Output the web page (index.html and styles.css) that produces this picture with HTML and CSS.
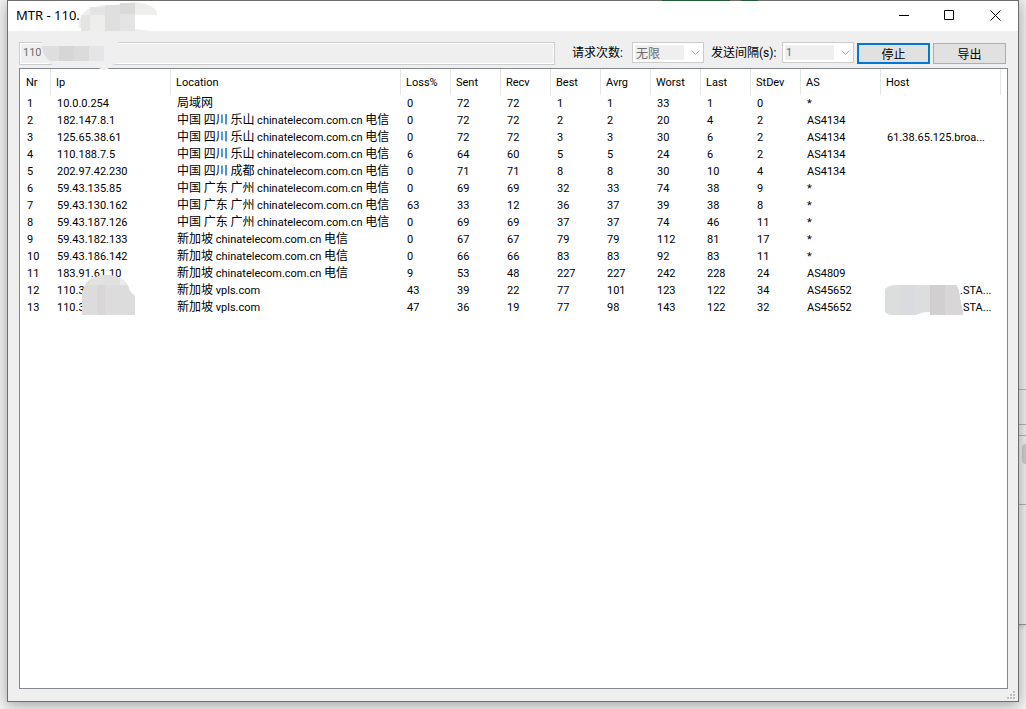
FILE: index.html
```html
<!DOCTYPE html>
<html lang="zh-CN">
<head>
<meta charset="utf-8">
<title>MTR - 110</title>
<link rel="stylesheet" href="styles.css">
</head>
<body>
<div class="backdrop" aria-hidden="true">
  <div class="pane pane-top"></div>
  <div class="pane pane-field"></div>
  <div class="pane pane-gap"></div>
  <div class="pane pane-scroll"><span class="thumb"></span></div>
  <div class="pane pane-foot"></div>
</div>
<main class="window">
  <header class="titlebar">
    <h1 class="title">MTR - 110.</h1>
    <div class="controls">
      <button class="control" aria-label="最小化"><svg width="11" height="11" viewBox="0 0 11 11"><path d="M1 5.5h10"/></svg></button>
      <button class="control" aria-label="最大化"><svg width="11" height="11" viewBox="0 0 11 11"><path d="M.5.5h9v9h-9z"/></svg></button>
      <button class="control" aria-label="关闭"><svg width="11" height="11" viewBox="0 0 11 11"><path d="M.5.5l10 10M10.5.5l-10 10"/></svg></button>
    </div>
  </header>
  <form class="toolbar">
    <input class="address" aria-label="Host" value="110" disabled>
    <label class="label" for="count">请求次数:</label>
    <span class="combo"><select id="count" class="cjk" disabled><option>无限</option></select><svg class="chevron" width="9" height="5" viewBox="0 0 9 5"><path d="M.5.5l4 4 4-4"/></svg></span>
    <label class="label label-interval" for="interval">发送间隔(s):</label>
    <span class="combo"><select id="interval" disabled><option>1</option></select><svg class="chevron" width="9" height="5" viewBox="0 0 9 5"><path d="M.5.5l4 4 4-4"/></svg></span>
    <div class="actions">
      <button type="button" class="button button-default">停止</button>
      <button type="button" class="button">导出</button>
    </div>
  </form>
  <section class="list">
    <table class="hops">
      <colgroup><col class="c-nr"><col class="c-ip"><col class="c-location"><col class="c-num" span="8"><col class="c-as"><col></colgroup>
      <thead>
        <tr><th>Nr</th><th>Ip</th><th>Location</th><th>Loss%</th><th>Sent</th><th>Recv</th><th>Best</th><th>Avrg</th><th>Worst</th><th>Last</th><th>StDev</th><th>AS</th><th>Host</th></tr>
      </thead>
      <tbody>
        <tr><td>1</td><td>10.0.0.254</td><td><span class="cjk">局域网</span></td><td>0</td><td>72</td><td>72</td><td>1</td><td>1</td><td>33</td><td>1</td><td>0</td><td>*</td><td></td></tr>
        <tr><td>2</td><td>182.147.8.1</td><td><span class="cjk">中国 四川 乐山</span> chinatelecom.com.cn <span class="cjk">电信</span></td><td>0</td><td>72</td><td>72</td><td>2</td><td>2</td><td>20</td><td>4</td><td>2</td><td>AS4134</td><td></td></tr>
        <tr><td>3</td><td>125.65.38.61</td><td><span class="cjk">中国 四川 乐山</span> chinatelecom.com.cn <span class="cjk">电信</span></td><td>0</td><td>72</td><td>72</td><td>3</td><td>3</td><td>30</td><td>6</td><td>2</td><td>AS4134</td><td>61.38.65.125.broa...</td></tr>
        <tr><td>4</td><td>110.188.7.5</td><td><span class="cjk">中国 四川 乐山</span> chinatelecom.com.cn <span class="cjk">电信</span></td><td>6</td><td>64</td><td>60</td><td>5</td><td>5</td><td>24</td><td>6</td><td>2</td><td>AS4134</td><td></td></tr>
        <tr><td>5</td><td>202.97.42.230</td><td><span class="cjk">中国 四川 成都</span> chinatelecom.com.cn <span class="cjk">电信</span></td><td>0</td><td>71</td><td>71</td><td>8</td><td>8</td><td>30</td><td>10</td><td>4</td><td>AS4134</td><td></td></tr>
        <tr><td>6</td><td>59.43.135.85</td><td><span class="cjk">中国 广东 广州</span> chinatelecom.com.cn <span class="cjk">电信</span></td><td>0</td><td>69</td><td>69</td><td>32</td><td>33</td><td>74</td><td>38</td><td>9</td><td>*</td><td></td></tr>
        <tr><td>7</td><td>59.43.130.162</td><td><span class="cjk">中国 广东 广州</span> chinatelecom.com.cn <span class="cjk">电信</span></td><td>63</td><td>33</td><td>12</td><td>36</td><td>37</td><td>39</td><td>38</td><td>8</td><td>*</td><td></td></tr>
        <tr><td>8</td><td>59.43.187.126</td><td><span class="cjk">中国 广东 广州</span> chinatelecom.com.cn <span class="cjk">电信</span></td><td>0</td><td>69</td><td>69</td><td>37</td><td>37</td><td>74</td><td>46</td><td>11</td><td>*</td><td></td></tr>
        <tr><td>9</td><td>59.43.182.133</td><td><span class="cjk">新加坡</span> chinatelecom.com.cn <span class="cjk">电信</span></td><td>0</td><td>67</td><td>67</td><td>79</td><td>79</td><td>112</td><td>81</td><td>17</td><td>*</td><td></td></tr>
        <tr><td>10</td><td>59.43.186.142</td><td><span class="cjk">新加坡</span> chinatelecom.com.cn <span class="cjk">电信</span></td><td>0</td><td>66</td><td>66</td><td>83</td><td>83</td><td>92</td><td>83</td><td>11</td><td>*</td><td></td></tr>
        <tr><td>11</td><td>183.91.61.10</td><td><span class="cjk">新加坡</span> chinatelecom.com.cn <span class="cjk">电信</span></td><td>9</td><td>53</td><td>48</td><td>227</td><td>227</td><td>242</td><td>228</td><td>24</td><td>AS4809</td><td></td></tr>
        <tr><td>12</td><td>110.3</td><td><span class="cjk">新加坡</span> vpls.com</td><td>43</td><td>39</td><td>22</td><td>77</td><td>101</td><td>123</td><td>122</td><td>34</td><td>AS45652</td><td class="masked-host">.STA...</td></tr>
        <tr><td>13</td><td>110.3</td><td><span class="cjk">新加坡</span> vpls.com</td><td>47</td><td>36</td><td>19</td><td>77</td><td>98</td><td>143</td><td>122</td><td>32</td><td>AS45652</td><td class="masked-host">.STA...</td></tr>
      </tbody>
    </table>
    <svg class="mask mask-ip" width="53" height="40" viewBox="0 0 53 40"><path fill="#dcdcdc" d="M0 40V18Q2 8 10 3Q24-3 38 3Q46 7 48 16L53 21V40z"/><path fill="#e2e2e2" d="M5 10Q9 2 22 0V10z"/><path fill="#e0e0e0" d="M22 0Q35 0 38 3V10H22z"/><path fill="#ebebeb" d="M38 3Q43 6 45 10H38z"/><path fill="#d8d6d7" d="M15 10h8v30h-8z"/></svg>
    <svg class="mask mask-host" width="78" height="30" viewBox="0 0 78 30"><path fill="#dcdddd" d="M0 4Q4 0 12 0H71Q74 2 75 14L78 27V30H45V27Q36 27 31 30H6Q0 29 0 26z"/><path fill="#d9dbde" d="M15 0h15v30H15z"/><path fill="#d1cfd0" d="M45 0h15v30H45z"/><path fill="#d8d6d7" d="M60 0h11q3 2 4 14l3 13v3H60z"/></svg>
  </section>
  <svg class="grip" width="8" height="8" viewBox="0 0 8 8"><path d="M6 0h2v2H6zM3 3h2v2H3zM6 3h2v2H6zM0 6h2v2H0zM3 6h2v2H3zM6 6h2v2H6z"/></svg>
  <svg class="mask mask-title" width="80" height="30" viewBox="0 0 80 30"><path fill="#eeeeed" d="M0 25Q1 13 10 7L24 3H36L56 0Q75 2 79 10V13H57V27L74 29L68 30H10z"/><path fill="#dfdfdf" d="M27 3h15v26H27z"/><path fill="#e4e4e4" d="M3 13h9v16H3zM12 5h15v8H12zM42 12h15v17H42z"/><path fill="#dadada" d="M42 1h15v11H42z"/></svg>
  <svg class="mask mask-address" width="78" height="35" viewBox="0 0 78 35"><path fill="#efefef" d="M0 8Q8 0 30 0H68L78 8V26Q75 30 70 30Q68 35 62 35Q58 34 55 30H12Q1 27 0 18z"/><path fill="#dedede" d="M1 11h17v15H9Q1 20 1 11z"/><path fill="#d6d6d6" d="M18 11h15v15H18z"/><path fill="#dbdbdb" d="M33 11h15v15H33z"/><path fill="#e5e5e8" d="M48 11h15v15H48z"/></svg>
</main>
</body>
</html>
```
FILE: styles.css
```css
* { box-sizing: border-box; }

body {
  margin: 0;
  min-height: 100vh;
  display: flex;
  position: relative;
  overflow: hidden;
  background: #f4f4f4;
  color: #000;
  font: 11px/17px Roboto, "Noto Sans CJK SC", sans-serif;
}

/* Edge of the window lying behind */
.backdrop {
  position: absolute;
  top: 0;
  right: 0;
  width: 20px;
  display: flex;
  flex-direction: column;
  background: #f0f0f0;
}
.pane { border-bottom: 1px solid #b4b4b4; }
.pane-top { height: 390px; }
.pane-field { height: 35px; }
.pane-gap { height: 11px; }
.pane-scroll { height: 69px; padding: 8px 0 0 16px; }
.pane-foot { height: 120px; border-color: #999; box-shadow: 0 2px 5px rgb(0 0 0 / 15%); }
.thumb { display: block; height: 20px; border-radius: 4px 0 0 4px; background: #cdcdcd; }

.window {
  position: relative;
  flex: 1;
  display: flex;
  flex-direction: column;
  margin: 0 7px 7px;
  border: 1px solid #6e6e6e;
  background: #efefef;
  box-shadow: 0 3px 14px rgb(0 0 0 / 35%);
}

/* Green strip showing through the top frame */
.window::before {
  content: "";
  position: absolute;
  top: -1px;
  right: 260px;
  width: 96px;
  height: 1px;
  background: linear-gradient(90deg, #215c38 68px, #6e6e6e 68px 79px, #215c38 79px);
}

.titlebar {
  display: flex;
  align-items: flex-start;
  justify-content: space-between;
  height: 30px;
  padding-left: 8px;
  background: #fff;
}
.title { margin: 0; font: 13px/28px "Noto Sans", sans-serif; }
.controls { display: flex; }
.control {
  display: grid;
  place-items: center;
  width: 46px;
  height: 28px;
  padding: 0;
  border: 0;
  background: none;
}
.control svg { fill: none; stroke: #000; }

.toolbar {
  display: flex;
  align-items: flex-start;
  padding: 11px 12px 3px 11px;
}
.address {
  flex: 1;
  min-width: 0;
  height: 23px;
  margin-right: 17px;
  padding: 0 3px 2px;
  border: 1px solid #ccc;
  box-shadow: inset 0 0 0 1px #fff;
  background: #efefef;
  color: #6d6d6d;
  font: inherit;
}
.label { width: 60px; font-size: 12px; line-height: 22px; white-space: nowrap; }
.label-interval { width: 71px; margin-left: 7px; }
.combo { position: relative; width: 72px; }
.combo select {
  display: block;
  width: 100%;
  height: 21px;
  padding: 0 20px 0 3px;
  border: 1px solid #ccc;
  border-radius: 0;
  appearance: none;
  background: linear-gradient(#efefef, #efefef) 2px 2px / calc(100% - 21px) 15px no-repeat #fff;
  color: #6d6d6d;
  font: inherit;
  opacity: 1;
}
.chevron { position: absolute; top: 8px; right: 4px; fill: none; stroke: #aaa; }
.actions { display: flex; gap: 3px; padding: 1px 0 0 3px; }
.button {
  width: 73px;
  height: 21px;
  padding: 0;
  border: 1px solid #adadad;
  background: #e1e1e1;
  color: #000;
  font: 12px/19px "Noto Sans CJK SC", sans-serif;
}
.button-default { border: 2px solid #0078d7; line-height: 17px; }

.list {
  position: relative;
  flex: 1;
  margin: 0 10px 12px 11px;
  border: 1px solid #828790;
  background: #fff;
}
.hops {
  width: calc(100% - 6px);
  table-layout: fixed;
  border-collapse: separate;
  border-spacing: 0;
}
.c-nr { width: 31px; }
.c-ip { width: 120px; }
.c-location { width: 230px; }
.c-num { width: 50px; }
.c-as { width: 80px; }
th, td {
  height: 17px;
  padding: 0 0 0 6px;
  font-weight: 400;
  text-align: left;
  white-space: nowrap;
}
th { height: 26px; padding-left: 5px; border-right: 1px solid #e5e5e5; }
.hops th:first-child { padding-left: 6px; }
td:first-child { padding-left: 7px; }
.hops .masked-host { padding-left: 79px; }
.cjk { font-family: "Noto Sans CJK SC", sans-serif; font-size: 12px; line-height: 12px; }
.combo .cjk { font-family: "Noto Sans CJK SC", sans-serif; font-size: 12px; line-height: 19px; }

.grip { position: absolute; right: 3px; bottom: 2px; fill: #bfbfbf; }

/* Blurred-out patches over private values */
.mask { position: absolute; }
.mask-title { top: 1px; left: 70px; }
.mask-address { top: 34px; left: 33px; }
.mask-ip { top: 206px; left: 62px; }
.mask-host { top: 216px; right: 44px; }
```
